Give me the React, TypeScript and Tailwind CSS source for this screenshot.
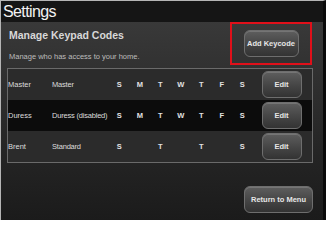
const DAYS = ["S", "M", "T", "W", "T", "F", "S"];

type Code = {
  name: string;
  kind: string;
  days: boolean[];
};

const CODES: Code[] = [
  { name: "Master", kind: "Master", days: [true, true, true, true, true, true, true] },
  { name: "Duress", kind: "Duress (disabled)", days: [true, true, true, true, true, true, true] },
  { name: "Brent", kind: "Standard", days: [true, false, true, false, true, false, true] },
];

const ROW_BG = ["bg-[#2b2b2b]", "bg-[#0c0c0c]", "bg-[#2b2b2b]"];

function GlossButton({ label, className }: { label: string; className: string }) {
  return (
    <button
      type="button"
      className={
        "flex items-center justify-center whitespace-nowrap rounded-[6px] border border-[#6e6e6e] bg-gradient-to-b from-[#5e5e5e] via-[#474747] to-[#333] text-[7.5px] font-bold text-[#e6e6e6] shadow-[inset_0_1px_0_rgba(255,255,255,0.15)] " +
        className
      }
    >
      {label}
    </button>
  );
}

export default function App() {
  return (
    <div className="flex h-[220px] w-[326px] flex-col overflow-hidden border-t border-l border-[#b5b5b5] border-r-[3px] border-r-[#0a0a0a] bg-gradient-to-b from-[#3c3c3c] to-[#1b1b1b] font-['Liberation_Sans',Arial,sans-serif]">
      {/* title bar */}
      <div className="flex h-[21px] shrink-0 items-center bg-[#151515] pl-[2px] pt-[1px] text-[16px] leading-none tracking-[-0.6px] text-[#f2f2f2]">
        Settings
      </div>

      <div className="flex flex-1 flex-col px-[6px]">
        {/* header */}
        <div className="flex h-[43px] items-start justify-between">
          <div className="flex flex-col pl-[2px] pt-[8px]">
            <span className="text-[10.5px] font-bold leading-none text-[#d8d8d8]">Manage Keypad Codes</span>
            <span className="mt-[12px] text-[7.5px] leading-none text-[#bdbdbd]">
              Manage who has access to your home.
            </span>
          </div>
          <div className="mr-[5px] flex h-[43px] w-[82px] items-center justify-center border-2 border-[#e0101a]">
            <GlossButton label="Add Keycode" className="h-[27px] w-[55px]" />
          </div>
        </div>

        {/* codes table */}
        <div className="mt-[3px] flex w-[306px] flex-col border border-[#6a6a6a]">
          {CODES.map((code, i) => (
            <div key={code.name} className={"flex h-[31px] items-center whitespace-nowrap " + ROW_BG[i]}>
              <span className="w-[44px] text-[7.5px] text-[#dcdcdc]">{code.name}</span>
              <span className="w-[57px] text-[7.5px] tracking-[-0.2px] text-[#dcdcdc]">{code.kind}</span>
              {DAYS.map((d, j) => (
                <span
                  key={j}
                  className="w-[20.5px] text-center text-[7.5px] font-bold text-[#e2e2e2]"
                >
                  {code.days[j] ? d : ""}
                </span>
              ))}
              <GlossButton label="Edit" className="ml-[9px] h-[27px] w-[40px]" />
            </div>
          ))}
        </div>

        <div className="mt-auto mb-[7px] flex justify-end pr-[4px]">
          <GlossButton label="Return to Menu" className="h-[27px] w-[69px]" />
        </div>
      </div>
    </div>
  );
}
